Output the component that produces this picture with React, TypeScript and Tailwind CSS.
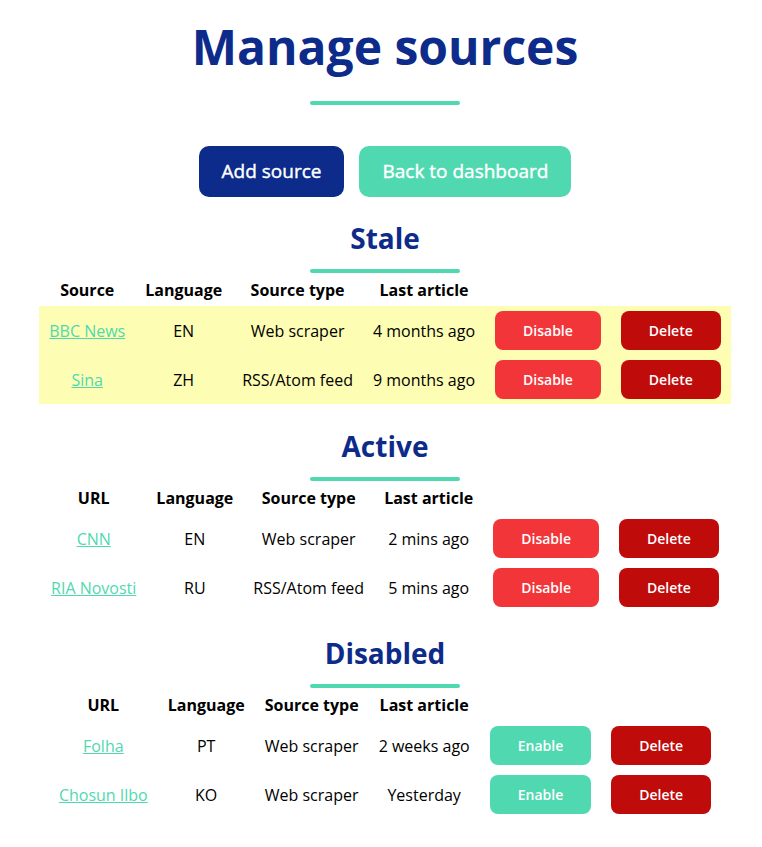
import React from 'react';

type Row = { name: string; lang: string; type: string; last: string };

const stale: Row[] = [
  { name: 'BBC News', lang: 'EN', type: 'Web scraper', last: '4 months ago' },
  { name: 'Sina', lang: 'ZH', type: 'RSS/Atom feed', last: '9 months ago' },
];

const active: Row[] = [
  { name: 'CNN', lang: 'EN', type: 'Web scraper', last: '2 mins ago' },
  { name: 'RIA Novosti', lang: 'RU', type: 'RSS/Atom feed', last: '5 mins ago' },
];

const disabled: Row[] = [
  { name: 'Folha', lang: 'PT', type: 'Web scraper', last: '2 weeks ago' },
  { name: 'Chosun Ilbo', lang: 'KO', type: 'Web scraper', last: 'Yesterday' },
];

function Bar({ className = '' }: { className?: string }) {
  return <div className={`h-1 w-[150px] rounded-full bg-[#50d9b0] ${className}`} />;
}

function SourceTable({
  title,
  firstCol,
  rows,
  highlight,
  enabled,
  className = '',
}: {
  title: string;
  firstCol: string;
  rows: Row[];
  highlight?: boolean;
  enabled: boolean;
  className?: string;
}) {
  return (
    <section className={`flex flex-col items-center ${className}`}>
      <h2 className="pt-px text-[28px] leading-[38px] font-bold text-[#0d2b8a]">{title}</h2>
      <Bar className="mt-[12px]" />
      <table className="mt-px border-collapse text-base leading-[22px] text-black">
        <thead>
          <tr>
            {[firstCol, 'Language', 'Source type', 'Last article', '', ''].map((h, i) => (
              <th key={i} className="px-[10px] py-[5px] font-bold text-center">
                {h}
              </th>
            ))}
          </tr>
        </thead>
        <tbody>
          {rows.map(r => (
            <tr key={r.name} className={highlight ? 'bg-[#fdfdb4]' : ''}>
              <td className="px-[10px] py-[5px] text-center">
                <a href="#" className="text-[#50d9b0] underline">
                  {r.name}
                </a>
              </td>
              <td className="px-[10px] py-[5px] text-center">{r.lang}</td>
              <td className="px-[10px] py-[5px] text-center whitespace-nowrap">{r.type}</td>
              <td className="px-[10px] py-[5px] text-center whitespace-nowrap">{r.last}</td>
              <td className="px-[10px] py-[5px] text-center">
                {enabled ? (
                  <button className="bg-[#f23539] text-white text-sm leading-[19px] font-semibold px-7 py-[10px] rounded-lg">
                    Disable
                  </button>
                ) : (
                  <button className="bg-[#50d9b0] text-white text-sm leading-[19px] font-semibold px-7 py-[10px] rounded-lg">
                    Enable
                  </button>
                )}
              </td>
              <td className="px-[10px] py-[5px] text-center">
                <button className="bg-[#c00b0b] text-white text-sm leading-[19px] font-semibold px-7 py-[10px] rounded-lg">
                  Delete
                </button>
              </td>
            </tr>
          ))}
        </tbody>
      </table>
    </section>
  );
}

export default function App() {
  return (
    <div className="min-h-screen bg-white pl-2 font-['Open_Sans',sans-serif]">
      <div className="flex flex-col items-center">
        <h1 className="mt-[14px] text-[48px] leading-[65px] font-bold text-[#0d2b8a]">Manage sources</h1>
        <Bar className="mt-[22px]" />
        <div className="mt-[41px] flex gap-[15px]">
          <button className="h-[51px] px-[23px] rounded-[10px] bg-[#0d2b8a] text-white text-[19px] [-webkit-text-stroke:0.4px_white]">
            Add source
          </button>
          <button className="h-[51px] px-[23px] rounded-[10px] bg-[#50d9b0] text-white text-[19px] [-webkit-text-stroke:0.4px_white]">
            Back to dashboard
          </button>
        </div>
        <SourceTable title="Stale" firstCol="Source" rows={stale} highlight enabled className="mt-[21px]" />
        <SourceTable title="Active" firstCol="URL" rows={active} enabled className="mt-[22px]" />
        <SourceTable title="Disabled" firstCol="URL" rows={disabled} enabled={false} className="mt-[21px]" />
      </div>
    </div>
  );
}
